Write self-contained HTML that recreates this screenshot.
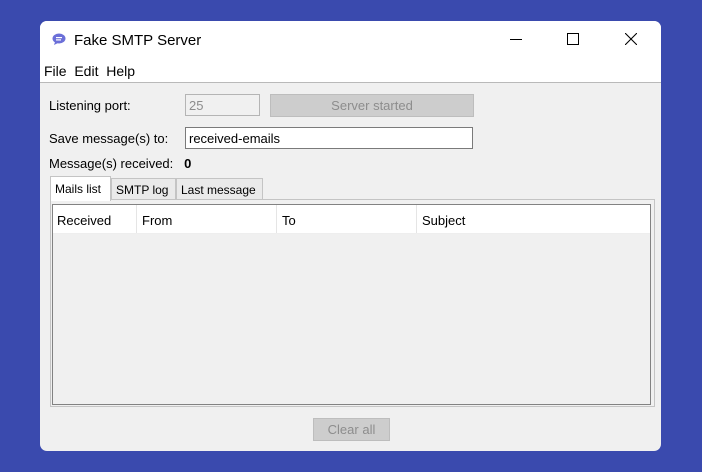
<!DOCTYPE html>
<html><head><style>
body{margin:0;width:702px;height:472px;background:#3a4aae;font-family:"Liberation Sans",sans-serif;position:relative;overflow:hidden}
.win{position:absolute;left:40px;top:21px;width:621px;height:430px;background:#f0f0f0;border-radius:7px;overflow:hidden}
.title{position:absolute;left:0;top:0;width:621px;height:61px;background:#fff;border-bottom:1px solid #b9b9b9}
.a{position:absolute;font-size:13px;color:#000;white-space:nowrap}
.box{position:absolute;background:#fff;border:1px solid #7a7a7a;box-sizing:border-box;font-size:13px;padding:3px 0 0 3px;white-space:nowrap}
.btn{position:absolute;background:#cdcdcd;border:1px solid #bdbdbd;box-sizing:border-box;color:#8d8d8d;font-size:13px;text-align:center;padding-top:3px;white-space:nowrap}
.tab{position:absolute;top:157px;height:22px;border:1px solid #c4c4c4;box-sizing:border-box;font-size:12px;padding:4px 0 0 4px;background:#eaeaea;white-space:nowrap;overflow:hidden}
</style></head><body>
<div class="win">
<div class="title">
<svg style="position:absolute;left:12px;top:12px" width="14" height="12" viewBox="0 0 14 12"><ellipse cx="7" cy="5.5" rx="6.5" ry="5" fill="#6b6fd8"/><path d="M3 9 L2 12 L6 10z" fill="#6b6fd8"/><rect x="4" y="4" width="6" height="1.2" fill="#fff"/><rect x="4" y="6.3" width="5" height="1.2" fill="#fff"/></svg>
<div class="a" style="left:34px;top:11px;font-size:15px">Fake SMTP Server</div>
<div style="position:absolute;left:470px;top:18px;width:12px;height:1px;background:#000"></div>
<div style="position:absolute;left:527px;top:12px;width:10px;height:10px;border:1px solid #000"></div>
<svg style="position:absolute;left:585px;top:12px" width="12" height="12"><path d="M0 0L12 12M12 0L0 12" stroke="#000" stroke-width="1.1"/></svg>
<div class="a" style="left:4px;top:42px;font-size:14px">File&nbsp; Edit&nbsp; Help</div>
</div>
<div class="a" style="left:9px;top:77px">Listening port:</div>
<div class="box" style="left:145px;top:73px;width:75px;height:22px;background:#f0f0f0;border-color:#b4b4b4;color:#8d8d8d">25</div>
<div class="btn" style="left:230px;top:73px;width:204px;height:23px">Server started</div>
<div class="a" style="left:9px;top:110px">Save message(s) to:</div>
<div class="box" style="left:145px;top:106px;width:288px;height:22px">received-emails</div>
<div class="a" style="left:9px;top:135px">Message(s) received:&nbsp;&nbsp; <b>0</b></div>
<div class="tab" style="left:10px;top:155px;width:61px;height:25px;background:#fff;border-bottom:none;padding-top:5px;z-index:2">Mails list</div>
<div class="tab" style="left:71px;width:65px">SMTP log</div>
<div class="tab" style="left:136px;width:87px">Last message</div>
<div style="position:absolute;left:10px;top:178px;width:605px;height:208px;border:1px solid #c4c4c4;box-sizing:border-box;background:#f0f0f0"></div>
<div style="position:absolute;left:12px;top:183px;width:599px;height:201px;border:1px solid #828282;box-sizing:border-box;background:#f0f0f0">
<div style="position:absolute;left:0;top:0;width:597px;height:28px;background:#fff;border-bottom:1px solid #eee"></div>
<div style="position:absolute;left:83px;top:0;width:1px;height:28px;background:#e5e5e5"></div>
<div style="position:absolute;left:223px;top:0;width:1px;height:28px;background:#e5e5e5"></div>
<div style="position:absolute;left:363px;top:0;width:1px;height:28px;background:#e5e5e5"></div>
<div class="a" style="left:4px;top:8px">Received</div>
<div class="a" style="left:89px;top:8px">From</div>
<div class="a" style="left:229px;top:8px">To</div>
<div class="a" style="left:369px;top:8px">Subject</div>
</div>
<div class="btn" style="left:273px;top:397px;width:77px;height:23px">Clear all</div>
</div>
</body></html>
